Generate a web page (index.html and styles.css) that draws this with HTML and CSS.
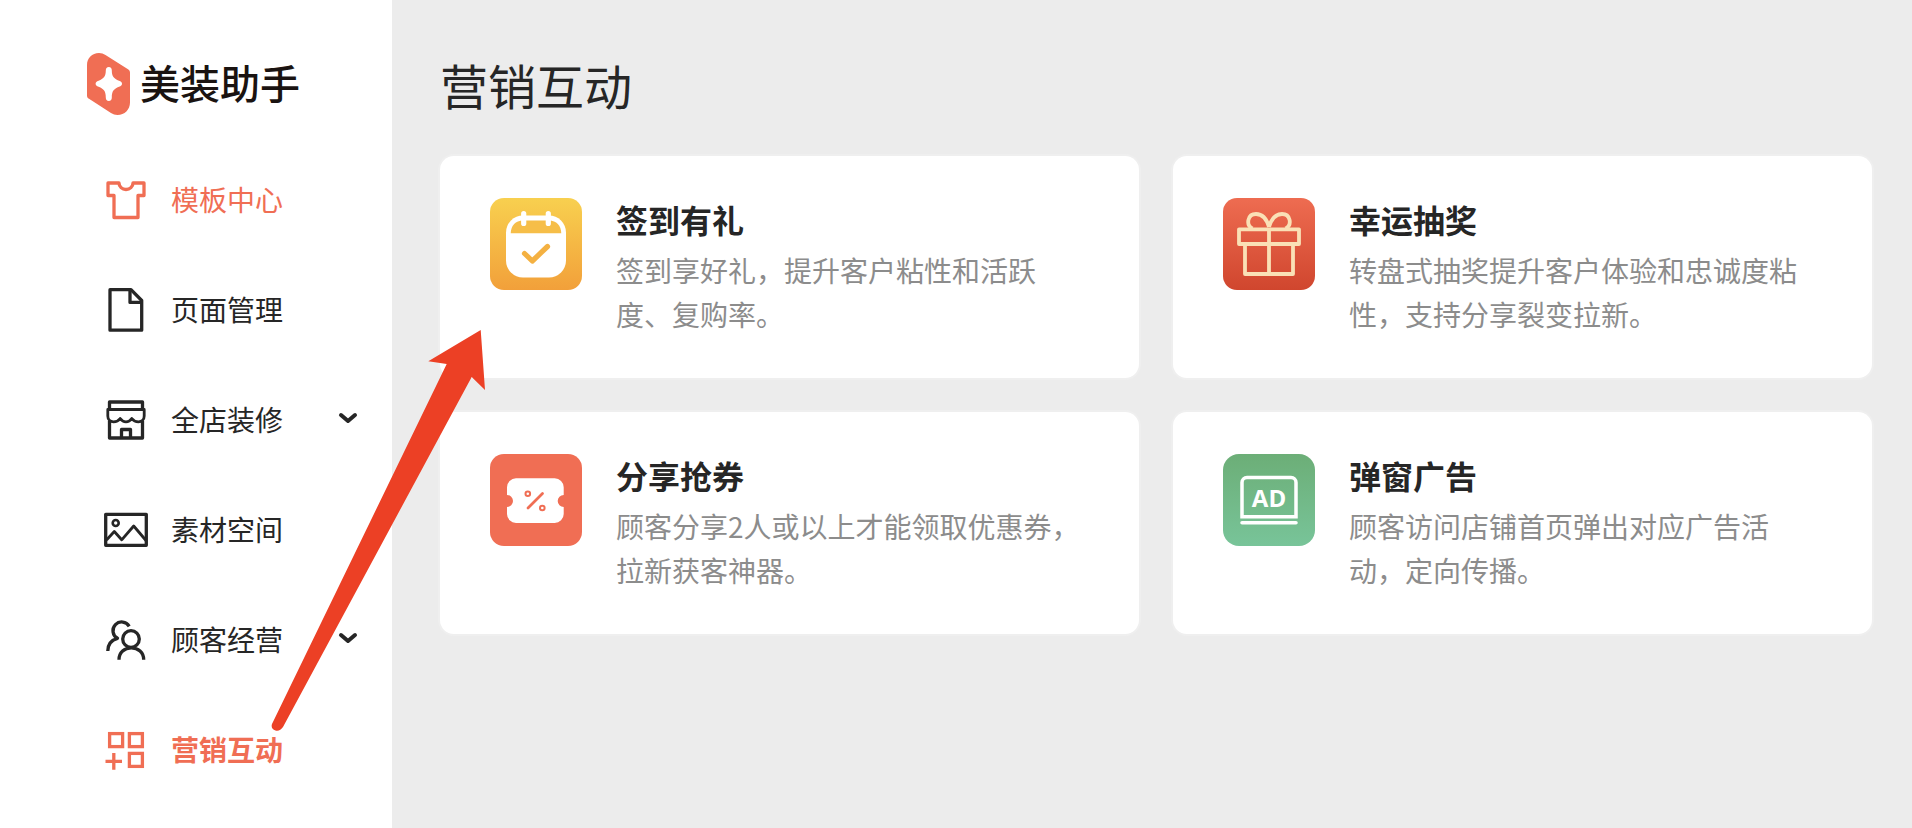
FILE: index.html
```html
<!DOCTYPE html>
<html lang="zh-CN">
<head>
    <meta charset="UTF-8">
    <meta name="viewport" content="width=device-width, initial-scale=1">
    <title>美装助手</title>
    <link rel="stylesheet" href="styles.css">
</head>
<body>
    <div class="layout">
        <!-- Left sidebar with the logo and the menu -->
        <aside class="sidebar">
            <a class="logo" href="#">
                <svg width="43" height="62" viewBox="0 0 43 62">
                    <path fill="#f06e54" d="M0 12C0 5 5 0 12 0c2.5 0 4.5.7 6.5 2L41 16.3c1.5 1 2 2 2 3.5V49.5C43 56.5 37.5 62 30.5 62c-2.500 0-4.500-.7-6.500-2L2 45.8C.6 45 0 44 0 42.5Z"/>
                    <path fill="#fff" d="M21.8 14c2 0 3 1.5 3 3.5 0 6 2 8 7.2 10.2 2 .8 3 1.6 3 3s-1 2.2-3 3c-5.2 2.200-7.200 4.300-7.200 10.800 0 2-1 3.500-3 3.500s-3-1.500-3-3.500c0-6.500-2-8.600-7.200-10.800-2-.8-3-1.600-3-3s1-2.200 3-3c5.200-2.200 7.200-4.200 7.200-10.200 0-2 1-3.500 3-3.500Z"/>
                </svg>
                <span>美装助手</span>
            </a>
            <nav class="menu">
                <a class="menu-item highlight" href="#">
                    <svg class="menu-icon" viewBox="0 0 44 44">
                        <path d="M4 5H15a7 6.5 0 0 0 14 0H40V17.5H34V39.5H10V17.5H4Z"/>
                    </svg>
                    <span>模板中心</span>
                </a>
                <a class="menu-item" href="#">
                    <svg class="menu-icon" viewBox="0 0 44 44">
                        <path d="M6 1.7H27L37.7 12.5V42.2H6Z"/>
                        <path d="M26 2V14.4H37.5"/>
                    </svg>
                    <span>页面管理</span>
                </a>
                <button class="menu-item" type="button">
                    <svg class="menu-icon" viewBox="0 0 44 44">
                        <path d="M5.5 11V4H38.5V11M5.5 23V40H38.5V23M17.5 39V31.5H26.5V39"/>
                        <path stroke-width="2.8" d="M3.8 11.5H40.2V18c0 4-2.7 5.8-5.7 5.8-3 0-5.2-1.2-6.7-3.3-1.5 2.1-3.5 3.3-5.8 3.3s-4.3-1.2-5.8-3.3c-1.5 2.1-3.7 3.3-6.7 3.3s-5.7-1.8-5.7-5.8Z"/>
                    </svg>
                    <span>全店装修</span>
                    <svg class="chevron" viewBox="0 0 20 12"><path d="M3 3L10 9L17 3"/></svg>
                </button>
                <a class="menu-item" href="#">
                    <svg class="menu-icon" viewBox="0 0 44 44">
                        <rect x="1.7" y="6.3" width="40.6" height="31"/>
                        <circle cx="11.7" cy="15" r="3" stroke-width="2.6"/>
                        <path stroke-width="2.8" d="M2.5 32L10.3 23.5L17.7 31.8L29.7 18L42 32.5"/>
                    </svg>
                    <span>素材空间</span>
                </a>
                <button class="menu-item" type="button">
                    <svg class="menu-icon" viewBox="0 0 44 44">
                        <circle cx="27" cy="21" r="8.3"/>
                        <path d="M15 41.7C15 34.5 20.5 29.8 27.3 29.8S39.7 34.5 39.7 41.7"/>
                        <path d="M25.2 8.3A8.7 8.7 0 1 0 13.5 20.3C7.5 22 3.8 26.5 3.8 33"/>
                    </svg>
                    <span>顾客经营</span>
                    <svg class="chevron" viewBox="0 0 20 12"><path d="M3 3L10 9L17 3"/></svg>
                </button>
                <a class="menu-item highlight current" href="#">
                    <svg class="menu-icon sharp" viewBox="0 0 44 44">
                        <rect x="5.6" y="5.6" width="13" height="13"/>
                        <rect x="25.4" y="5.6" width="13" height="13"/>
                        <rect x="25.4" y="25.4" width="13" height="13"/>
                        <path d="M1.5 33.3H18M9.8 25V41.7"/>
                    </svg>
                    <span>营销互动</span>
                </a>
            </nav>
        </aside>

        <!-- Marketing tools -->
        <main class="content">
            <h1>营销互动</h1>
            <div class="cards">
                <a class="card" href="#">
                    <svg class="card-icon" viewBox="0 0 92 92">
                        <defs>
                            <linearGradient id="yellow" x1="0" y1="0" x2="0" y2="1">
                                <stop offset="0" stop-color="#f8d04f"/>
                                <stop offset="1" stop-color="#f2a03a"/>
                            </linearGradient>
                        </defs>
                        <rect width="92" height="92" rx="14" fill="url(#yellow)"/>
                        <rect x="16" y="17.5" width="60" height="62" rx="17" fill="#fff"/>
                        <path fill="#f6be48" d="M20.7 35.3C21 27.5 25.5 22.5 33 22.5H59C66.5 22.5 71 27.5 71.3 35.3Z"/>
                        <g fill="none" stroke-linecap="round" stroke-linejoin="round" stroke-width="5.2">
                            <path stroke="#fff" d="M33.7 15.5V25.5M58.3 15.5V25.5"/>
                            <path stroke="#f4b142" d="M34.5 55.5L42.3 63L57.5 48.5"/>
                        </g>
                    </svg>
                    <div class="card-text">
                        <h2>签到有礼</h2>
                        <p>签到享好礼，提升客户粘性和活跃度、复购率。</p>
                    </div>
                </a>
                <a class="card" href="#">
                    <svg class="card-icon" viewBox="0 0 92 92">
                        <defs>
                            <linearGradient id="red" x1="0" y1="0" x2="0" y2="1">
                                <stop offset="0" stop-color="#ee6c51"/>
                                <stop offset="1" stop-color="#d0462e"/>
                            </linearGradient>
                        </defs>
                        <rect width="92" height="92" rx="14" fill="url(#red)"/>
                        <g fill="none" stroke="#fae0b6" stroke-width="3.8" stroke-linejoin="round">
                            <rect x="16" y="31.3" width="60" height="14.7"/>
                            <path d="M22 46V76H70V46M46 30V76"/>
                            <path d="M46 29C43.5 20.5 38.5 16 33 16 24.5 16 22.5 27 29.5 30.5M46 29C48.5 20.5 53.5 16 59 16 67.5 16 69.5 27 62.5 30.5"/>
                        </g>
                    </svg>
                    <div class="card-text">
                        <h2>幸运抽奖</h2>
                        <p>转盘式抽奖提升客户体验和忠诚度粘性，支持分享裂变拉新。</p>
                    </div>
                </a>
                <a class="card" href="#">
                    <svg class="card-icon" viewBox="0 0 92 92">
                        <rect width="92" height="92" rx="14" fill="#f06e54"/>
                        <path fill="#fff" d="M26 24.3H64.7a9 9 0 0 1 9 9V41a6 6 0 0 0 0 12V60a9 9 0 0 1-9 9H26a9 9 0 0 1-9-9V53a6 6 0 0 0 0-12V33.3a9 9 0 0 1 9-9Z"/>
                        <g fill="none" stroke="#f06e54" stroke-linecap="round">
                            <path stroke-width="2.8" d="M38 54L52.5 39.5"/>
                            <circle cx="37.8" cy="39.7" r="2.3" stroke-width="2"/>
                            <circle cx="52.3" cy="54" r="2.3" stroke-width="2"/>
                        </g>
                    </svg>
                    <div class="card-text">
                        <h2>分享抢券</h2>
                        <p>顾客分享2人或以上才能领取优惠券，拉新获客神器。</p>
                    </div>
                </a>
                <a class="card" href="#">
                    <svg class="card-icon" viewBox="0 0 92 92">
                        <defs>
                            <linearGradient id="green" x1="0" y1="0" x2="0" y2="1">
                                <stop offset="0" stop-color="#6cae77"/>
                                <stop offset="1" stop-color="#78c499"/>
                            </linearGradient>
                        </defs>
                        <rect width="92" height="92" rx="16" fill="url(#green)"/>
                        <g fill="none" stroke="#fff" stroke-width="3.5" stroke-linecap="round">
                            <path d="M19 62.8V28.5a5 5 0 0 1 5-5H68a5 5 0 0 1 5 5V62.8Z"/>
                            <path d="M19 68.8H73"/>
                        </g>
                        <text class="ad" x="46" y="53" text-anchor="middle">AD</text>
                    </svg>
                    <div class="card-text">
                        <h2>弹窗广告</h2>
                        <p>顾客访问店铺首页弹出对应广告活动，定向传播。</p>
                    </div>
                </a>
            </div>
        </main>
    </div>

    <!-- Arrow from the menu entry to the first card -->
    <svg class="arrow" width="58" height="402" viewBox="428 330 58 402" aria-hidden="true">
        <path d="M480.7 330L485 390L471.7 377L283 727Q280 731.5 275.5 730.5Q270.5 728.5 272 724L446.7 364L428.3 361.3Z"/>
    </svg>
</body>
</html>
```
FILE: styles.css
```css
* {
    box-sizing: border-box;
}
body {
    margin: 0;
    position: relative;
    font-family: "Noto Sans CJK SC", sans-serif;
    color: #262626;
    background: #ececec;
}
a {
    color: inherit;
    text-decoration: none;
}
.layout {
    display: flex;
    min-height: 100vh;
}

/* Sidebar */
.sidebar {
    flex: 0 0 392px;
    padding: 53px 34px 0 87px;
    background: white;
}
.logo {
    display: flex;
    align-items: center;
    gap: 10px;
    height: 62px;
    font-size: 40px;
    font-weight: 500;
    color: #1a1311;
}
.logo span {
    padding-bottom: 4px;
}
.menu {
    display: flex;
    flex-direction: column;
    gap: 66px;
    margin-top: 63px;
    padding-left: 17px;
}
.menu-item {
    display: flex;
    align-items: center;
    width: 100%;
    height: 44px;
    padding: 0;
    border: none;
    background: none;
    font-family: inherit;
    font-size: 28px;
    line-height: 42px;
    color: #262626;
    cursor: pointer;
}
.menu-item span {
    padding-bottom: 2px;
}
.menu-item.highlight {
    color: #f06e54;
}
.menu-item.current {
    font-weight: bold;
}
.menu-icon {
    width: 44px;
    height: 44px;
    margin-right: 23px;
    fill: none;
    stroke: currentColor;
    stroke-width: 3.3;
    stroke-linejoin: round;
}
.menu-icon.sharp {
    stroke-linejoin: miter;
}
.chevron {
    width: 20px;
    height: 12px;
    margin-left: auto;
    margin-bottom: 4px;
    fill: none;
    stroke: currentColor;
    stroke-width: 4;
    stroke-linecap: round;
    stroke-linejoin: round;
}

/* Main area */
.content {
    flex: 1;
    padding: 52px 40px 40px 48px;
}
h1 {
    margin: 0 0 40px;
    font-size: 48px;
    font-weight: 400;
    line-height: 64px;
}
.cards {
    display: grid;
    grid-template-columns: 1fr 1fr;
    gap: 34px;
}
.card {
    display: flex;
    align-items: flex-start;
    gap: 34px;
    padding: 42px 54px 42px 50px;
    border-radius: 14px;
    background: white;
    box-shadow: 0 0 0 2px #efefef;
}
.card-icon {
    flex: none;
    width: 92px;
    height: 92px;
}
.card-text h2 {
    margin: 0 0 8px;
    font-size: 32px;
    font-weight: bold;
    line-height: 42px;
}
.card-text p {
    margin: 0;
    font-size: 28px;
    line-height: 44px;
    color: #8c8c8c;
}
.ad {
    font-family: "Open Sans", sans-serif;
    font-size: 24px;
    font-weight: bold;
    fill: white;
}

/* Lies over the sidebar and the cards */
.arrow {
    position: absolute;
    top: 330px;
    left: 428px;
    overflow: visible;
    fill: #ec4025;
    pointer-events: none;
}
```
